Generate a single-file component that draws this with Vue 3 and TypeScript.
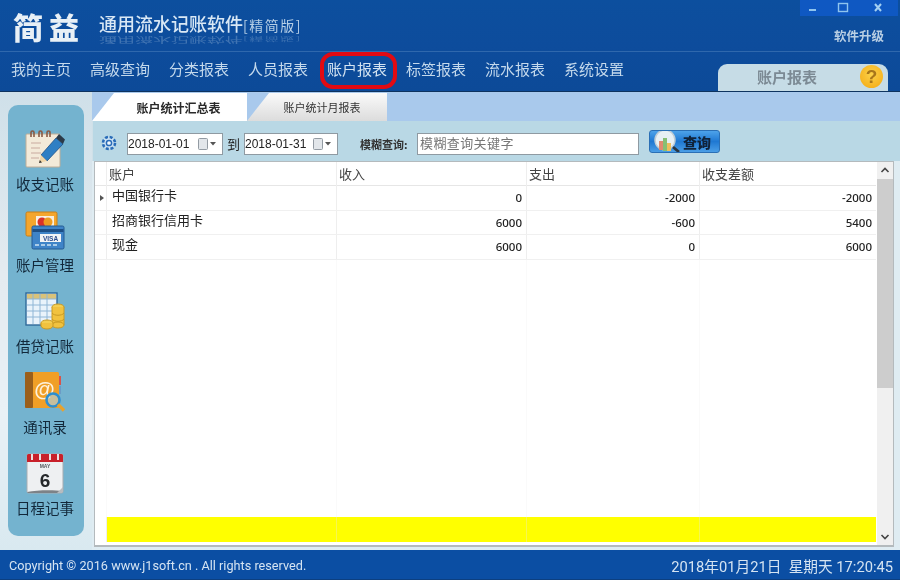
<script setup lang="ts">
const navItems = ['我的主页', '高级查询', '分类报表', '人员报表', '账户报表', '标签报表', '流水报表', '系统设置']
const activeNav = '账户报表'

const sideItems = [
  { key: 'note', label: '收支记账' },
  { key: 'card', label: '账户管理' },
  { key: 'loan', label: '借贷记账' },
  { key: 'book', label: '通讯录' },
  { key: 'date', label: '日程记事' },
]

const rows = [
  { name: '中国银行卡', income: '0', expense: '-2000', diff: '-2000' },
  { name: '招商银行信用卡', income: '6000', expense: '-600', diff: '5400' },
  { name: '现金', income: '6000', expense: '0', diff: '6000' },
]
</script>

<template>
  <div class="app">
    <header class="top">
      <div class="title-row">
        <div class="logo">简益</div>
        <div class="product">
          <div class="product-name">通用流水记账软件<span class="edition">[精简版]</span></div>
          <div class="reflection">通用流水记账软件<span class="edition">[精简版]</span></div>
        </div>
        <div class="win-side">
          <div class="win-buttons">
            <svg width="98" height="16" viewBox="0 0 98 16">
              <path d="M9 10h7" stroke="#8fc4ee" stroke-width="2" />
              <rect x="38.5" y="3.5" width="9" height="8" fill="none" stroke="#8fc4ee" stroke-width="1.4" />
              <path d="M75 4l6 7M81 4l-6 7" stroke="#a4d0f2" stroke-width="2" />
            </svg>
          </div>
          <div class="upgrade">软件升级</div>
        </div>
      </div>
      <div class="nav-row">
        <nav class="nav">
          <span v-for="item in navItems" :key="item" class="nav-item" :class="{ active: item === activeNav }">{{ item }}</span>
        </nav>
        <div class="page-tag">
          <span class="page-tag-name">账户报表</span>
          <span class="help">?</span>
        </div>
      </div>
    </header>

    <div class="middle">
      <aside class="side">
        <div class="side-panel">
          <div v-for="item in sideItems" :key="item.key" class="side-item">
            <svg v-if="item.key === 'note'" width="40" height="38" viewBox="0 0 40 38">
              <rect x="1" y="4" width="34" height="33" rx="1" fill="#f3ead9" stroke="#bfae98" />
              <path d="M6 13h10M6 18h9M6 23h10M6 28h8" stroke="#c9a9a0" stroke-width="1.2" />
              <g fill="none" stroke="#8a5a44" stroke-width="1.6">
                <path d="M6 7V2.500a1.500 1.500 0 0 1 3 0V7M14 7V2.500a1.500 1.500 0 0 1 3 0V7M22 7V2.500a1.500 1.500 0 0 1 3 0V7" />
              </g>
              <path d="M16 25L31 8l7 6-16 17z" fill="#2f7fc4" stroke="#1c4f86" stroke-width=".8" />
              <path d="M31 8l3-4 6 5.500-2 4.500z" fill="#2b3a48" />
              <path d="M16 25l-2 8 8-2z" fill="#f1d6a8" />
              <path d="M14 33l.8-3 2.200 2.400z" fill="#333" />
            </svg>
            <svg v-else-if="item.key === 'card'" width="40" height="38" viewBox="0 0 40 38">
              <rect x="1" y="1" width="31" height="24" rx="1.500" fill="#f4a62d" stroke="#c97f16" />
              <rect x="11" y="5" width="18" height="13" fill="#f8efe0" />
              <circle cx="17" cy="11" r="4.500" fill="#d8312a" />
              <circle cx="23" cy="11" r="4.500" fill="#ee9c22" />
              <rect x="7" y="15" width="32" height="23" rx="1.500" fill="#3f84c8" stroke="#245b92" />
              <rect x="7.500" y="18" width="31" height="3" fill="#1d4f86" />
              <rect x="15" y="23" width="21" height="8" fill="#f2f4f6" />
              <text x="25.500" y="30" font-size="6.500" font-weight="700" fill="#2b4d8e" text-anchor="middle" font-family="Liberation Sans, sans-serif">VISA</text>
              <path d="M10 34h4M16 34h4M22 34h4M28 34h4" stroke="#cfe3f2" stroke-width="1.500" />
            </svg>
            <svg v-else-if="item.key === 'loan'" width="40" height="38" viewBox="0 0 40 38">
              <rect x="1" y="1" width="31" height="32" fill="#e9f3fb" stroke="#2f6a9a" stroke-width="1.400" />
              <rect x="2" y="2" width="29" height="5" fill="#d9c27a" />
              <path d="M2 7h29M2 13h29M2 19h29M2 25h29M8 2v30M15 2v30M22 2v30" stroke="#8fb6d6" />
              <ellipse cx="33" cy="15" rx="6" ry="3" fill="#f4cf52" stroke="#c99a24" />
              <rect x="27" y="15" width="12" height="18" fill="#f1c23f" />
              <path d="M27 15v18M39 15v18M27 21c2 3 10 3 12 0M27 27c2 3 10 3 12 0" fill="none" stroke="#c99a24" />
              <ellipse cx="33" cy="33" rx="6" ry="3" fill="#f1c23f" stroke="#c99a24" />
              <ellipse cx="22" cy="31" rx="6" ry="3" fill="#f4cf52" stroke="#c99a24" />
              <path d="M16 31v3c1 4 11 4 12 0v-3" fill="#f1c23f" stroke="#c99a24" />
            </svg>
            <svg v-else-if="item.key === 'book'" width="42" height="42" viewBox="0 0 42 42">
              <rect x="33" y="5" width="4" height="9" fill="#d9534a" />
              <rect x="33" y="15" width="4" height="8" fill="#6c9cc6" />
              <rect x="1" y="1" width="34" height="36" rx="1.500" fill="#f09f26" />
              <rect x="1" y="1" width="8" height="36" rx="1" fill="#9a5f1b" />
              <text x="20.500" y="25" font-size="21" font-weight="700" fill="#fdf1dc" text-anchor="middle" font-family="Liberation Sans, sans-serif">@</text>
              <circle cx="29" cy="29" r="6.500" fill="#a8d4ec" fill-opacity=".6" stroke="#2c8ed0" stroke-width="2.600" />
              <path d="M34 33.500l6 6" stroke="#e9a22c" stroke-width="3.400" />
            </svg>
            <svg v-else width="40" height="42" viewBox="0 0 40 42">
              <rect x="2" y="2" width="36" height="39" rx="1.500" fill="#eef0f2" stroke="#a7adb2" />
              <path d="M2 40c10-2 26-2 36-1l-1 2H3z" fill="#7d8287" />
              <path d="M2 3.500a1.500 1.500 0 0 1 1.500-1.500h33a1.500 1.500 0 0 1 1.500 1.500V10H2z" fill="#c8202a" />
              <g stroke="#ecdfe0" stroke-width="2">
                <path d="M7 2v6M15 2v6M25 2v6M33 2v6" />
              </g>
              <text x="20" y="16" font-size="5" font-weight="700" fill="#55595e" text-anchor="middle" font-family="Liberation Sans, sans-serif">MAY</text>
              <text x="20" y="35" font-size="19" font-weight="700" fill="#24272a" text-anchor="middle" font-family="Liberation Sans, sans-serif">6</text>
              <path d="M32 41l6-6v5l-1 1z" fill="#b8bcc0" />
            </svg>
            <span class="side-label">{{ item.label }}</span>
          </div>
        </div>
      </aside>

      <main class="content">
        <div class="tabs">
          <div class="tab tab-on">账户统计汇总表</div>
          <div class="tab tab-off">账户统计月报表</div>
        </div>
        <div class="toolbar">
          <svg class="gear" width="16" height="16" viewBox="0 0 16 16">
            <circle cx="8" cy="8" r="6" fill="#cfe4f5" stroke="#2a6cb8" stroke-width="2.600" stroke-dasharray="3 1.700" />
            <circle cx="8" cy="8" r="2.600" fill="#f2f8fc" stroke="#2a6cb8" stroke-width="1.500" />
          </svg>
          <div class="date date-from">
            <span>2018-01-01</span>
            <svg width="20" height="12" viewBox="0 0 20 12">
              <rect x="0.500" y="0.500" width="9" height="11" rx="1" fill="#e2e6ea" stroke="#939ba3" />
              <path d="M12 4h6l-3 3.500z" fill="#555" />
            </svg>
          </div>
          <span class="to">到</span>
          <div class="date date-to">
            <span>2018-01-31</span>
            <svg width="20" height="12" viewBox="0 0 20 12">
              <rect x="0.500" y="0.500" width="9" height="11" rx="1" fill="#e2e6ea" stroke="#939ba3" />
              <path d="M12 4h6l-3 3.500z" fill="#555" />
            </svg>
          </div>
          <span class="fuzzy">模糊查询:</span>
          <div class="keyword">模糊查询关键字</div>
          <div class="search-btn">
            <svg width="28" height="23" viewBox="0 0 28 23">
              <circle cx="12" cy="10" r="10" fill="#e8f0f4" stroke="#bfcdd6" stroke-width="1.500" />
              <rect x="6" y="11" width="4" height="9" fill="#e08a70" />
              <rect x="10" y="8" width="4" height="13" fill="#86c074" />
              <rect x="14" y="13" width="4" height="8" fill="#eebf5c" />
              <path d="M20 17l6 5" stroke="#2c3640" stroke-width="2.800" />
            </svg>
            <span>查询</span>
          </div>
        </div>

        <div class="grid-panel">
          <div class="grid">
            <div class="grid-row grid-head">
              <div class="cell mark"></div>
              <div class="cell">账户</div>
              <div class="cell">收入</div>
              <div class="cell">支出</div>
              <div class="cell">收支差额</div>
            </div>
            <div v-for="(row, i) in rows" :key="row.name" class="grid-row grid-data">
              <div class="cell mark"><span v-if="i === 0" class="pointer"></span></div>
              <div class="cell name">{{ row.name }}</div>
              <div class="cell num">{{ row.income }}</div>
              <div class="cell num">{{ row.expense }}</div>
              <div class="cell num">{{ row.diff }}</div>
            </div>
            <div class="grid-row grid-fill">
              <div class="cell mark"></div>
              <div class="cell"></div>
              <div class="cell"></div>
              <div class="cell"></div>
              <div class="cell"></div>
            </div>
            <div class="grid-row grid-total">
              <div class="cell mark"></div>
              <div class="cell"></div>
              <div class="cell"></div>
              <div class="cell"></div>
              <div class="cell"></div>
            </div>
          </div>
          <div class="scrollbar">
            <svg width="16" height="17" viewBox="0 0 16 17"><path d="M4.500 10l3.500-3.500 3.500 3.500" fill="none" stroke="#444" stroke-width="1.600" /></svg>
            <div class="track"><div class="thumb"></div></div>
            <svg width="16" height="17" viewBox="0 0 16 17"><path d="M4.500 7l3.500 3.500 3.500-3.500" fill="none" stroke="#444" stroke-width="1.600" /></svg>
          </div>
        </div>
      </main>
    </div>

    <footer class="status">
      <span>Copyright © 2016 www.j1soft.cn . All rights reserved.</span>
      <span class="clock">2018年01月21日&nbsp; 星期天 17:20:45</span>
    </footer>
  </div>
</template>

<style scoped>
.app {
  width: 900px;
  height: 582px;
  display: flex;
  flex-direction: column;
  overflow: hidden;
  background: #fff;
  font-family: "Noto Sans CJK SC", "Liberation Sans", sans-serif;
  filter: blur(0.3px);
}
.top {
  height: 92px;
  display: flex;
  flex-direction: column;
  background: linear-gradient(180deg, #0c4f9e 0%, #0d4c9c 50%, #0c4a98 100%);
  border-bottom: 1px solid #0e335f;
  box-sizing: border-box;
}
.title-row {
  height: 51px;
  display: flex;
  border-bottom: 1px solid #2f68ad;
  box-sizing: content-box;
}
.logo {
  width: 99px;
  padding-left: 13px;
  box-sizing: border-box;
  color: #e8f0f6;
  font-size: 30px;
  line-height: 53px;
  font-weight: 900;
  letter-spacing: 6px;
  white-space: nowrap;
}
.product {
  padding-top: 13px;
  color: #d9e8f5;
}
.product-name {
  height: 20px;
  font-size: 18px;
  line-height: 20px;
  font-weight: 500;
  white-space: nowrap;
}
.edition {
  font-size: 14px;
  letter-spacing: 1.500px;
  font-weight: 400;
  color: #b6cfe6;
}
.reflection {
  height: 9px;
  margin-top: 3px;
  font-size: 18px;
  line-height: 9px;
  white-space: nowrap;
  opacity: 0.25;
  transform: scaleY(-0.42);
}
.win-side {
  margin-left: auto;
  display: flex;
  flex-direction: column;
  align-items: flex-end;
}
.win-buttons {
  width: 98px;
  height: 16px;
  margin-right: 2px;
  background: #0f58c2;
  line-height: 0;
}
.upgrade {
  margin-top: 11px;
  margin-right: 16px;
  font-size: 12.500px;
  line-height: 18px;
  font-weight: 700;
  color: #b9cfe4;
}
.nav-row {
  flex: 1;
  display: flex;
  justify-content: space-between;
  min-height: 0;
}
.nav {
  display: flex;
  gap: 19px;
  padding: 7px 0 0 11px;
}
.nav-item {
  position: relative;
  font-size: 15px;
  line-height: 20px;
  height: 20px;
  color: #c4d9ec;
  white-space: nowrap;
}
.nav-item.active {
  color: #d3e3f1;
}
.nav-item.active::after {
  content: "";
  position: absolute;
  left: -7px;
  right: -10px;
  top: -7px;
  bottom: -10px;
  border: 4px solid #e20a12;
  border-radius: 13px;
}
.page-tag {
  width: 170px;
  height: 27px;
  margin: 12px 12px 0 0;
  padding-bottom: 2px;
  box-sizing: border-box;
  display: flex;
  align-items: center;
  background: #c6dce6;
  border-radius: 9px 9px 0 0;
  position: relative;
}
.page-tag-name {
  margin-left: 39px;
  font-size: 15px;
  font-weight: 700;
  color: #7c8a94;
}
.help {
  position: absolute;
  right: 5px;
  top: 1px;
  width: 23px;
  height: 23px;
  border-radius: 50%;
  background: radial-gradient(circle at 50% 40%, #fbd24a, #f4a70f);
  color: #a8761a;
  font: 700 19px/23px "Liberation Sans", sans-serif;
  text-align: center;
}
.middle {
  flex: 1;
  display: flex;
  min-height: 0;
}
.side {
  width: 92px;
  flex: none;
  padding: 13px 8px 14px;
  box-sizing: border-box;
  background: linear-gradient(180deg, #cfe0e9 0%, #e4ebf0 40%, #e9f1f6 70%, #d9e9f0 100%);
}
.side-panel {
  height: 100%;
  padding: 23px 2px 0 0;
  box-sizing: border-box;
  background: #74b3cf;
  border-radius: 10px;
  display: flex;
  flex-direction: column;
  gap: 11px;
  align-items: center;
}
.side-item {
  display: flex;
  flex-direction: column;
  align-items: center;
  height: 70px;
}
.side-item svg {
  height: 42px;
  flex: none;
}
.side-label {
  margin-top: 4px;
  font-size: 14.500px;
  line-height: 20px;
  color: #12283a;
  white-space: nowrap;
}
.content {
  flex: 1;
  min-width: 0;
  display: flex;
  flex-direction: column;
  background: #dfecf2;
}
.tabs {
  height: 29px;
  display: flex;
  padding-top: 1px;
  box-sizing: border-box;
  background: #a9c9ec;
}
.tab {
  height: 28px;
  line-height: 29px;
  text-align: center;
  clip-path: polygon(0 100%, 22px 0, 100% 0, 100% 100%);
}
.tab-on {
  width: 155px;
  padding-left: 18px;
  box-sizing: border-box;
  background: #fff;
  font-size: 12px;
  font-weight: 700;
  color: #2a2a2a;
}
.tab-off {
  width: 140px;
  padding-left: 10px;
  box-sizing: border-box;
  background: linear-gradient(180deg, #fafafa, #dcdcdc);
  font-size: 11px;
  color: #333;
}
.toolbar {
  height: 40px;
  display: flex;
  align-items: flex-start;
  padding: 12px 0 0 8px;
  box-sizing: border-box;
  background: #b9d8e5;
  border-left: 1px solid #cfe0e8;
}
.gear {
  margin: 2px 10px 0 0;
}
.date {
  height: 22px;
  padding: 0 4px 0 0;
  box-sizing: border-box;
  display: flex;
  align-items: center;
  justify-content: space-between;
  background: #fff;
  border: 1px solid #8f9aa2;
  font: 12px "Liberation Sans", sans-serif;
  color: #222;
}
.date-from {
  width: 96px;
}
.date-to {
  width: 94px;
}
.to {
  width: 21px;
  text-align: center;
  font-size: 13px;
  line-height: 22px;
  color: #222;
}
.fuzzy {
  margin-left: 22px;
  width: 57px;
  font-size: 11px;
  line-height: 22px;
  font-weight: 700;
  color: #333;
  white-space: nowrap;
}
.keyword {
  width: 222px;
  height: 22px;
  padding-left: 2px;
  box-sizing: border-box;
  background: #fff;
  border: 1px solid #8f9aa2;
  font-size: 13px;
  line-height: 18px;
  letter-spacing: 0.4px;
  color: #777;
}
.search-btn {
  width: 71px;
  height: 23px;
  margin: -3px 0 0 10px;
  padding-left: 3px;
  box-sizing: border-box;
  display: flex;
  align-items: center;
  gap: 2px;
  overflow: hidden;
  background: linear-gradient(180deg, #4ea3ea 0%, #1f78d2 50%, #4a9ee6 100%);
  border: 1px solid #2a6fb5;
  border-radius: 3px;
  font-size: 14px;
  font-weight: 900;
  color: #10233a;
}
.grid-panel {
  height: 386px;
  margin: 0 6px 0 2px;
  box-sizing: border-box;
  display: flex;
  background: #fff;
  border: 1px solid #b4babd;
  border-bottom-width: 2px;
}
.grid {
  flex: 1;
  min-width: 0;
  display: flex;
  flex-direction: column;
}
.grid-row {
  display: grid;
  grid-template-columns: 12px 230px 190px 173px 1fr;
  box-sizing: border-box;
}
.cell {
  min-width: 0;
  box-sizing: border-box;
  border-right: 1px solid #eeeeee;
  white-space: nowrap;
}
.cell:last-child {
  border-right: 0;
}
.grid-head {
  height: 24px;
  border-bottom: 1px solid #e6e6e6;
  font-size: 13px;
  line-height: 24px;
  color: #444;
}
.grid-head .cell {
  padding-left: 2px;
}
.grid-data {
  height: 24.500px;
  border-bottom: 1px solid #f0f0f0;
  font-size: 13px;
  line-height: 18px;
  color: #222;
}
.mark {
  position: relative;
}
.pointer {
  position: absolute;
  left: 5px;
  top: 9px;
  border: 3.500px solid transparent;
  border-left: 4px solid #555;
  border-right: 0;
}
.name {
  padding-left: 5px;
}
.num {
  padding: 2px 4px 0 0;
  text-align: right;
  font: 500 11.500px/20px "Noto Sans", sans-serif;
  color: #222;
}
.grid-fill {
  flex: 1;
}
.grid-fill .cell {
  border-right-color: #fafafa;
}
.grid-total {
  height: 28px;
  padding-bottom: 3px;
}
.grid-total .cell:not(.mark) {
  background: #ffff00;
  border-right-color: #f6f650;
}
.scrollbar {
  width: 16px;
  flex: none;
  display: flex;
  flex-direction: column;
  background: #f0f0f0;
  margin-left: 1px;
}
.scrollbar svg {
  flex: none;
}
.track {
  flex: 1;
}
.thumb {
  height: 209px;
  background: #cdcdcd;
}
.status {
  height: 30px;
  margin-bottom: 2px;
  padding: 2px 7px 0 9px;
  flex: none;
  display: flex;
  align-items: center;
  justify-content: space-between;
  box-sizing: border-box;
  background: #0b4ea3;
  border-bottom: 1px solid #0c3f80;
  color: #d5e4f2;
  font: 12.700px Roboto, "Noto Sans CJK SC", sans-serif;
}
.clock {
  font-size: 14.700px;
}
</style>
